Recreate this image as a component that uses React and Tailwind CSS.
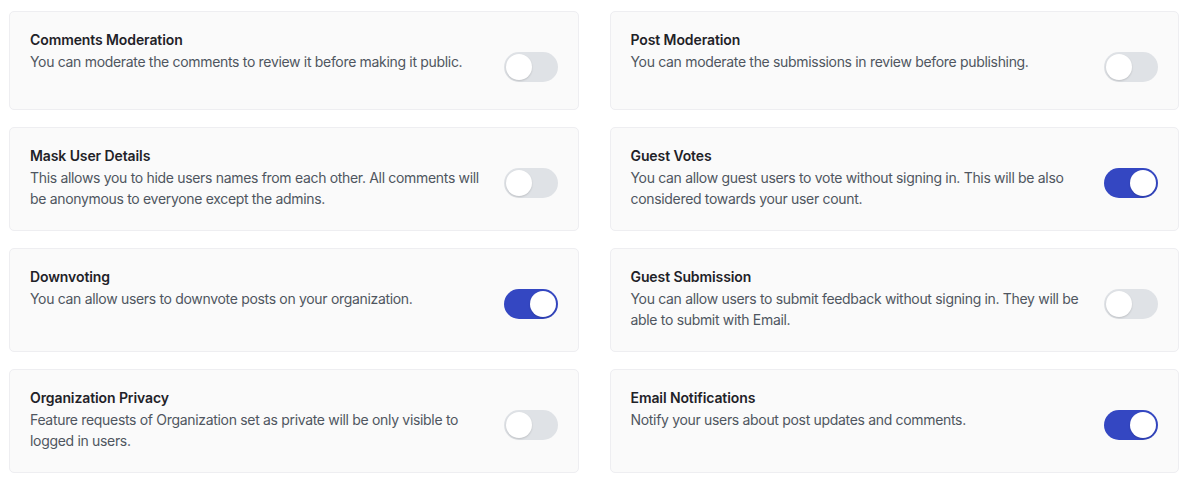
import React, { useState } from 'react';

// descriptions are split the way the design wraps them
const SETTINGS = [
  {
    id: 'comments',
    title: 'Comments Moderation',
    desc: ['You can moderate the comments to review it before making it public.'],
    on: false,
  },
  {
    id: 'posts',
    title: 'Post Moderation',
    desc: ['You can moderate the submissions in review before publishing.'],
    on: false,
  },
  {
    id: 'mask',
    title: 'Mask User Details',
    desc: [
      'This allows you to hide users names from each other. All comments will',
      'be anonymous to everyone except the admins.',
    ],
    on: false,
  },
  {
    id: 'guestVotes',
    title: 'Guest Votes',
    desc: [
      'You can allow guest users to vote without signing in. This will be also',
      'considered towards your user count.',
    ],
    on: true,
  },
  {
    id: 'downvoting',
    title: 'Downvoting',
    desc: ['You can allow users to downvote posts on your organization.'],
    on: true,
  },
  {
    id: 'guestSubmission',
    title: 'Guest Submission',
    desc: [
      'You can allow users to submit feedback without signing in. They will be',
      'able to submit with Email.',
    ],
    on: false,
  },
  {
    id: 'privacy',
    title: 'Organization Privacy',
    desc: [
      'Feature requests of Organization set as private will be only visible to',
      'logged in users.',
    ],
    on: false,
  },
  {
    id: 'email',
    title: 'Email Notifications',
    desc: ['Notify your users about post updates and comments.'],
    on: true,
  },
];

function Toggle({ on, onChange }) {
  return (
    <button
      type="button"
      role="switch"
      aria-checked={on}
      onClick={() => onChange(!on)}
      className={`relative mt-[1px] flex h-[30px] w-[54px] flex-shrink-0 items-center rounded-full p-[2px] transition ${
        on ? 'justify-end bg-[#3447c2]' : 'justify-start bg-[#dfe2e6]'
      }`}
    >
      <span className="block h-[26px] w-[26px] rounded-full bg-white shadow-[0_1px_2px_rgba(0,0,0,0.15)]" />
    </button>
  );
}

function SettingCard({ item, onToggle }) {
  return (
    <div className="min-h-[99px] rounded-[5px] border border-[#eeeef1] bg-[#fafafa] px-5 pb-[21px] pt-[18px]">
      <h3 className="text-sm font-semibold leading-5 tracking-[-0.1px] text-[#1f2228]">{item.title}</h3>
      <div className="mt-[1px] flex items-start justify-between gap-3">
        <p className="min-w-0 whitespace-nowrap text-sm leading-[21px] tracking-[-0.32px] text-[#4f5660]">
          {item.desc.map((line, i) => (
            <React.Fragment key={i}>
              {i > 0 && <br />}
              {line}
            </React.Fragment>
          ))}
        </p>
        <Toggle on={item.on} onChange={() => onToggle(item.id)} />
      </div>
    </div>
  );
}

export default function App() {
  const [settings, setSettings] = useState(SETTINGS);

  const toggle = (id) => {
    setSettings((prev) => prev.map((s) => (s.id === id ? { ...s, on: !s.on } : s)));
  };

  return (
    <div className="min-h-[477px] bg-white pl-[9px] pr-[11px] pt-[11px] font-['Inter',sans-serif] antialiased">
      <div className="grid grid-cols-2 gap-x-[31px] gap-y-[17px]">
        {settings.map((s) => (
          <SettingCard key={s.id} item={s} onToggle={toggle} />
        ))}
      </div>
    </div>
  );
}
